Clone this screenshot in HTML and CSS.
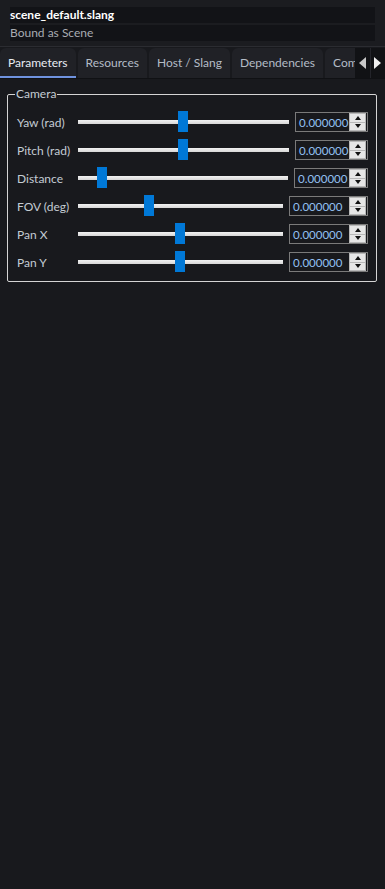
FILE: index.html
```html
<!DOCTYPE html>
<html lang="en">
<head>
    <meta charset="UTF-8">
    <meta name="viewport" content="width=device-width, initial-scale=1.0">
    <title>Scene Parameters</title>
    <link rel="stylesheet" href="styles.css">
</head>
<body>
    <div class="header">
        <div class="field title">scene_default.slang</div>
        <div class="field sub">Bound as Scene</div>
    </div>
    <div class="tabbar">
        <div class="tabs">
            <div class="tab active">Parameters</div>
            <div class="tab">Resources</div>
            <div class="tab">Host / Slang</div>
            <div class="tab">Dependencies</div>
            <div class="tab">Compile</div>
        </div>
        <div class="arrows">
            <span class="arrow left"></span>
            <span class="arrow right"></span>
        </div>
    </div>
    <fieldset class="group">
        <legend>Camera</legend>
        <div class="row">
            <label>Yaw (rad)</label>
            <div class="slider"><span class="handle" style="--v: 0.5"></span></div>
            <div class="spin w73"><span class="num">0.000000</span><span class="btns"><i class="up"></i><i class="down"></i></span></div>
        </div>
        <div class="row">
            <label>Pitch (rad)</label>
            <div class="slider"><span class="handle" style="--v: 0.5"></span></div>
            <div class="spin w73"><span class="num">0.000000</span><span class="btns"><i class="up"></i><i class="down"></i></span></div>
        </div>
        <div class="row">
            <label>Distance</label>
            <div class="slider"><span class="handle" style="--v: 0.1"></span></div>
            <div class="spin w74"><span class="num">0.000000</span><span class="btns"><i class="up"></i><i class="down"></i></span></div>
        </div>
        <div class="row">
            <label>FOV (deg)</label>
            <div class="slider"><span class="handle" style="--v: 0.345"></span></div>
            <div class="spin w79"><span class="num">0.000000</span><span class="btns"><i class="up"></i><i class="down"></i></span></div>
        </div>
        <div class="row">
            <label>Pan X</label>
            <div class="slider"><span class="handle" style="--v: 0.5"></span></div>
            <div class="spin w79"><span class="num">0.000000</span><span class="btns"><i class="up"></i><i class="down"></i></span></div>
        </div>
        <div class="row">
            <label>Pan Y</label>
            <div class="slider"><span class="handle" style="--v: 0.5"></span></div>
            <div class="spin w79"><span class="num">0.000000</span><span class="btns"><i class="up"></i><i class="down"></i></span></div>
        </div>
    </fieldset>
</body>
</html>
```

FILE: styles.css
```css
body {
    margin: 0;
    background-color: #18191d;
    font-family: Lato, "Noto Sans", sans-serif;
    font-size: 12px;
    color: #c4ccd4;
    height: 889px;
}
.header {
    padding: 7px 10px 5px;
    border-bottom: 1px solid #2b2c31;
    background-color: #1b1c20;
}
.field {
    height: 16px;
    line-height: 16px;
    background-color: #121317;
    margin-bottom: 2px;
}
.field:last-child {
    margin-bottom: 0;
}
.title {
    color: #ffffff;
    font-weight: 700;
}
.sub {
    color: #a9acb2;
}
.tabbar {
    display: flex;
    height: 30px;
    margin-top: 1px;
    border-bottom: 1px solid #101114;
}
.tabs {
    flex: 1;
    display: flex;
    gap: 2px;
    overflow: hidden;
    white-space: nowrap;
}
.tab {
    padding: 0 8px;
    line-height: 30px;
    background-color: #202126;
    border-radius: 6px 6px 0 0;
    color: #b4bcc6;
}
.tab.active {
    color: #e8ecf2;
    border-bottom: 2px solid #6f92de;
    line-height: 29px;
}
.arrows {
    width: 30px;
    display: flex;
    background-color: #111215;
}
.arrow {
    flex: 1;
    display: flex;
    align-items: center;
    justify-content: center;
}
.arrow::before {
    content: "";
    border-top: 6px solid transparent;
    border-bottom: 6px solid transparent;
}
.arrow.left::before {
    border-right: 7px solid #c8c8c8;
}
.arrow.right {
    border-left: 1px solid #23242a;
}
.arrow.right::before {
    border-left: 7px solid #f0f0f0;
}
.group {
    margin: 8px 8px 0 7px;
    padding: 11px 8px 9px 9px;
    border: 1px solid #d4d4d4;
    border-radius: 2px;
}
.group legend {
    padding: 0 1px;
    margin-left: -2px;
    color: #c4ccd4;
    line-height: 14px;
}
.row {
    display: flex;
    align-items: center;
    height: 20px;
    margin-bottom: 8px;
}
.row:last-child {
    margin-bottom: 0;
}
.row label {
    width: 61px;
    flex-shrink: 0;
}
.slider {
    flex: 1;
    position: relative;
    height: 4px;
    background: linear-gradient(#f2f2f2, #d6d6d6);
    margin-right: 6px;
}
.handle {
    position: absolute;
    top: -9px;
    left: calc(var(--v) * (100% - 10px) - 1px);
    width: 10px;
    height: 21px;
    background-color: #0078d7;
}
.spin {
    box-sizing: border-box;
    height: 20px;
    border: 1px solid #7a7a7a;
    display: flex;
    align-items: center;
    justify-content: space-between;
    padding: 1px;
}
.w73 { width: 73px; }
.w74 { width: 74px; }
.w79 { width: 79px; }
.num {
    color: #93c0f2;
    padding-left: 2px;
    font-size: 11.5px;
}
.btns {
    width: 15px;
    height: 16px;
    display: flex;
    flex-direction: column;
    background-color: #e6e6e6;
    border: 1px solid #b8b8b8;
}
.btns i {
    flex: 1;
    display: flex;
    align-items: center;
    justify-content: center;
}
.btns i + i {
    border-top: 1px solid #b8b8b8;
}
.btns i::before {
    content: "";
    border-left: 3px solid transparent;
    border-right: 3px solid transparent;
}
.up::before {
    border-bottom: 4px solid #111;
}
.down::before {
    border-top: 4px solid #111;
}
```
